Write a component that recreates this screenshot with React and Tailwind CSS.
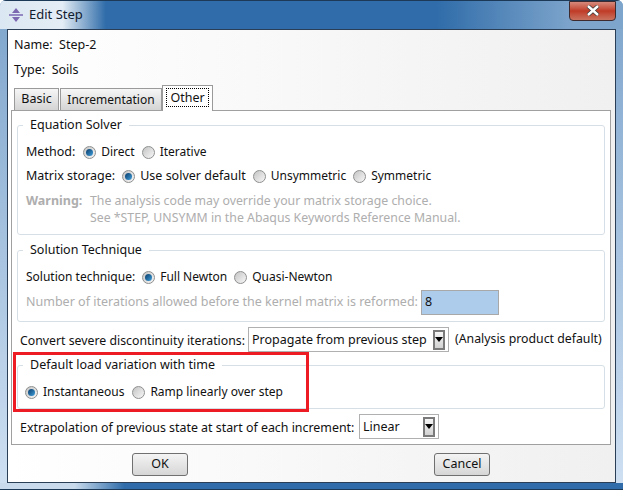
import React from "react";

function Radio({ on, label, size }) {
  return (
    <span className="inline-flex items-center gap-[5px]">
      <span className="w-[13px] h-[13px] rounded-full border border-[#8e8f8f] bg-gradient-to-br from-[#c4c4c4] to-[#f8f8f8] flex items-center justify-center shrink-0">
        {on ? (
          <span className="w-[7px] h-[7px] rounded-full bg-gradient-to-br from-[#0b3d6b] to-[#3fa0dc]" />
        ) : null}
      </span>
      <span className={size || "text-[12px]"}>{label}</span>
    </span>
  );
}

function Combo({ text, className }) {
  return (
    <div className={"h-[25px] border border-[#b0b0b0] bg-white flex items-center justify-between pl-[3px] pr-[3px] " + className}>
      <span className="pt-[1px]">{text}</span>
      <span className="w-[12px] h-[20px] border-2 border-[#7a7a7a] bg-gradient-to-b from-[#f6f6f6] to-[#d2d2d2] flex items-start pt-[5px] justify-center">
        <svg width="8" height="5" viewBox="0 0 8 5"><path d="M0 0H8L4 5Z" fill="#000" /></svg>
      </span>
    </div>
  );
}

function Group({ title, className, children }) {
  return (
    <fieldset className={"border border-[#d5dfe5] rounded-[3px] px-[7px] " + className}>
      <legend className="-ml-[2px] px-[7px] h-[16px] leading-[16px]">{title}</legend>
      {children}
    </fieldset>
  );
}

export default function App() {
  return (
    <div className="w-[623px] h-[490px] relative overflow-hidden rounded-t-[6px] bg-gradient-to-b from-[#7ea5cc] to-[#cfe0f2] text-[12.5px] text-[#111] flex flex-col" style={{ fontFamily: '"Noto Sans", "Open Sans", sans-serif' }}>
      {/* Title bar */}
      <div className="h-[29px] shrink-0 flex items-center justify-between pl-[8px] pr-[7px] bg-[linear-gradient(90deg,#dbe7f2_0%,#e4edf5_10%,#2f6ca9_17%,#2f6ca9_70%,#7ea5cc_92%,#7ea5cc_100%)] border-t border-[#1c3a58]">
        <div className="flex items-center gap-[5px]">
          <svg width="16" height="16" viewBox="0 0 16 16">
            <path d="M8 1L12 6H4Z M8 15L4 10H12Z" fill="#7c68b0" />
            <rect x="1" y="7" width="14" height="2" fill="#9488c4" />
          </svg>
          <span className="text-[13px] text-[#10202f]">Edit Step</span>
        </div>
        <div className="w-[47px] h-[20px] -mt-[9px] rounded-b-[4px] border border-[#3d2b30] bg-gradient-to-b from-[#d6897c] via-[#bf3a26] to-[#c9725f] flex items-center justify-center">
          <svg width="14" height="11" viewBox="0 0 14 11"><path d="M2 1L12 10M12 1L2 10" stroke="#3a3a3a" strokeWidth="4" /><path d="M2 1L12 10M12 1L2 10" stroke="#fff" strokeWidth="2.4" /></svg>
        </div>
      </div>

      {/* Client area */}
      <div className="flex-1 ml-[7px] mr-[7px] border border-[#2a3f55] bg-gradient-to-r from-[#ffffff] to-[#f0f0f0] flex flex-col">
        <div className="pl-[6px] pt-[6px] flex flex-col">
          <div className="h-[18px] leading-[18px]">Name:&nbsp;&nbsp;Step-2</div>
          <div className="h-[18px] leading-[18px] mt-[7px]">Type:&nbsp;&nbsp;Soils</div>
        </div>

        {/* Tabs */}
        <div className="flex items-end pl-[6px] mt-[6px] h-[25px] relative z-10">
          <div className="w-[45px] h-[22px] border border-[#9a9a9a] border-b-0 bg-gradient-to-b from-[#f6f6f6] to-[#d4d4d4] flex items-center justify-center">Basic</div>
          <div className="w-[102px] h-[22px] ml-[1px] border border-[#9a9a9a] border-b-0 bg-gradient-to-b from-[#f6f6f6] to-[#d4d4d4] flex items-center justify-center text-[12px]">Incrementation</div>
          <div className="w-[51px] h-[26px] -mb-[1px] border border-[#9a9a9a] border-b-0 bg-white flex items-center justify-center pb-[2px]">
            <span className="border border-dotted border-black px-[3px] leading-[17px]">Other</span>
          </div>
        </div>

        {/* Panel */}
        <div className="ml-[3px] mr-[4px] h-[335px] border border-[#a0a0a0] bg-white px-[5px] pt-[6px] flex flex-col">
          <Group title="Equation Solver" className="h-[118px]">
            <div className="mt-[10px] ml-[1px] h-[18px] flex items-center gap-[7px]">
              <span className="mr-[1px]">Method:</span>
              <Radio on label="Direct" />
              <Radio label="Iterative" />
            </div>
            <div className="mt-[6px] ml-[1px] h-[18px] flex items-center gap-[7px]">
              <span>Matrix storage:</span>
              <Radio on label="Use solver default" size="text-[12.5px]" />
              <Radio label="Unsymmetric" />
              <Radio label="Symmetric" />
            </div>
            <div className="mt-[7px] ml-[1px] flex text-[#aeaeae] leading-[17px]">
              <span className="w-[64px] font-bold shrink-0">Warning:</span>
              <span className="text-[12.3px]">The analysis code may override your matrix storage choice.<br />See *STEP, UNSYMM in the Abaqus Keywords Reference Manual.</span>
            </div>
          </Group>

          <Group title="Solution Technique" className="h-[80px] mt-[7px]">
            <div className="mt-[10px] ml-[1px] h-[18px] flex items-center gap-[7px]">
              <span className="text-[12px]">Solution technique:</span>
              <Radio on label="Full Newton" />
              <Radio label="Quasi-Newton" />
            </div>
            <div className="mt-[4px] ml-[1px] h-[25px] flex items-center gap-[4px] text-[#aeaeae]">
              <span className="w-[391px] whitespace-nowrap">Number of iterations allowed before the kernel matrix is reformed:</span>
              <div className="w-[78px] h-[25px] border border-[#a8a8a8] bg-[#adcbeb] text-[#111] pl-[3px] flex items-center">8</div>
            </div>
          </Group>

          <div className="mt-[5px] h-[25px] flex items-center">
            <span className="ml-[3px] w-[228px] whitespace-nowrap pt-[3px] text-[12.3px]">Convert severe discontinuity iterations:</span>
            <Combo text="Propagate from previous step" className="w-[201px]" />
            <span className="ml-[6px] -mt-[1px] whitespace-nowrap text-[12.3px]">(Analysis product default)</span>
          </div>

          <Group title="Default load variation with time" className="h-[52px] mt-[5px]">
            <div className="mt-[10px] h-[18px] flex items-center gap-[8px]">
              <Radio on label="Instantaneous" />
              <Radio label="Ramp linearly over step" />
            </div>
          </Group>

          <div className="mt-[5px] h-[25px] flex items-center">
            <span className="ml-[3px] w-[339px] whitespace-nowrap pt-[3px] text-[12.4px]">Extrapolation of previous state at start of each increment:</span>
            <Combo text="Linear" className="w-[80px]" />
          </div>
        </div>

        {/* Buttons */}
        <div className="flex-1 flex items-center justify-between pl-[124px] pr-[125px] pt-[2px]">
          <button className="w-[56px] h-[23px] rounded-[3px] border border-[#707070] bg-gradient-to-b from-[#f4f4f4] to-[#d6d6d6] flex items-center justify-center">OK</button>
          <button className="w-[56px] h-[23px] rounded-[3px] border border-[#707070] bg-gradient-to-b from-[#f4f4f4] to-[#d6d6d6] flex items-center justify-center">Cancel</button>
        </div>
      </div>
      <div className="h-[7px] shrink-0 bg-[linear-gradient(90deg,#c8daec_0%,#c8daec_12%,#2f6ca9_20%,#2f6ca9_100%)] border-b border-[#1c3a58]" />

      {/* Annotation */}
      <div className="absolute left-[13px] top-[352px] w-[296px] h-[60px] border-[3px] border-[#ed1c24]" />
    </div>
  );
}
